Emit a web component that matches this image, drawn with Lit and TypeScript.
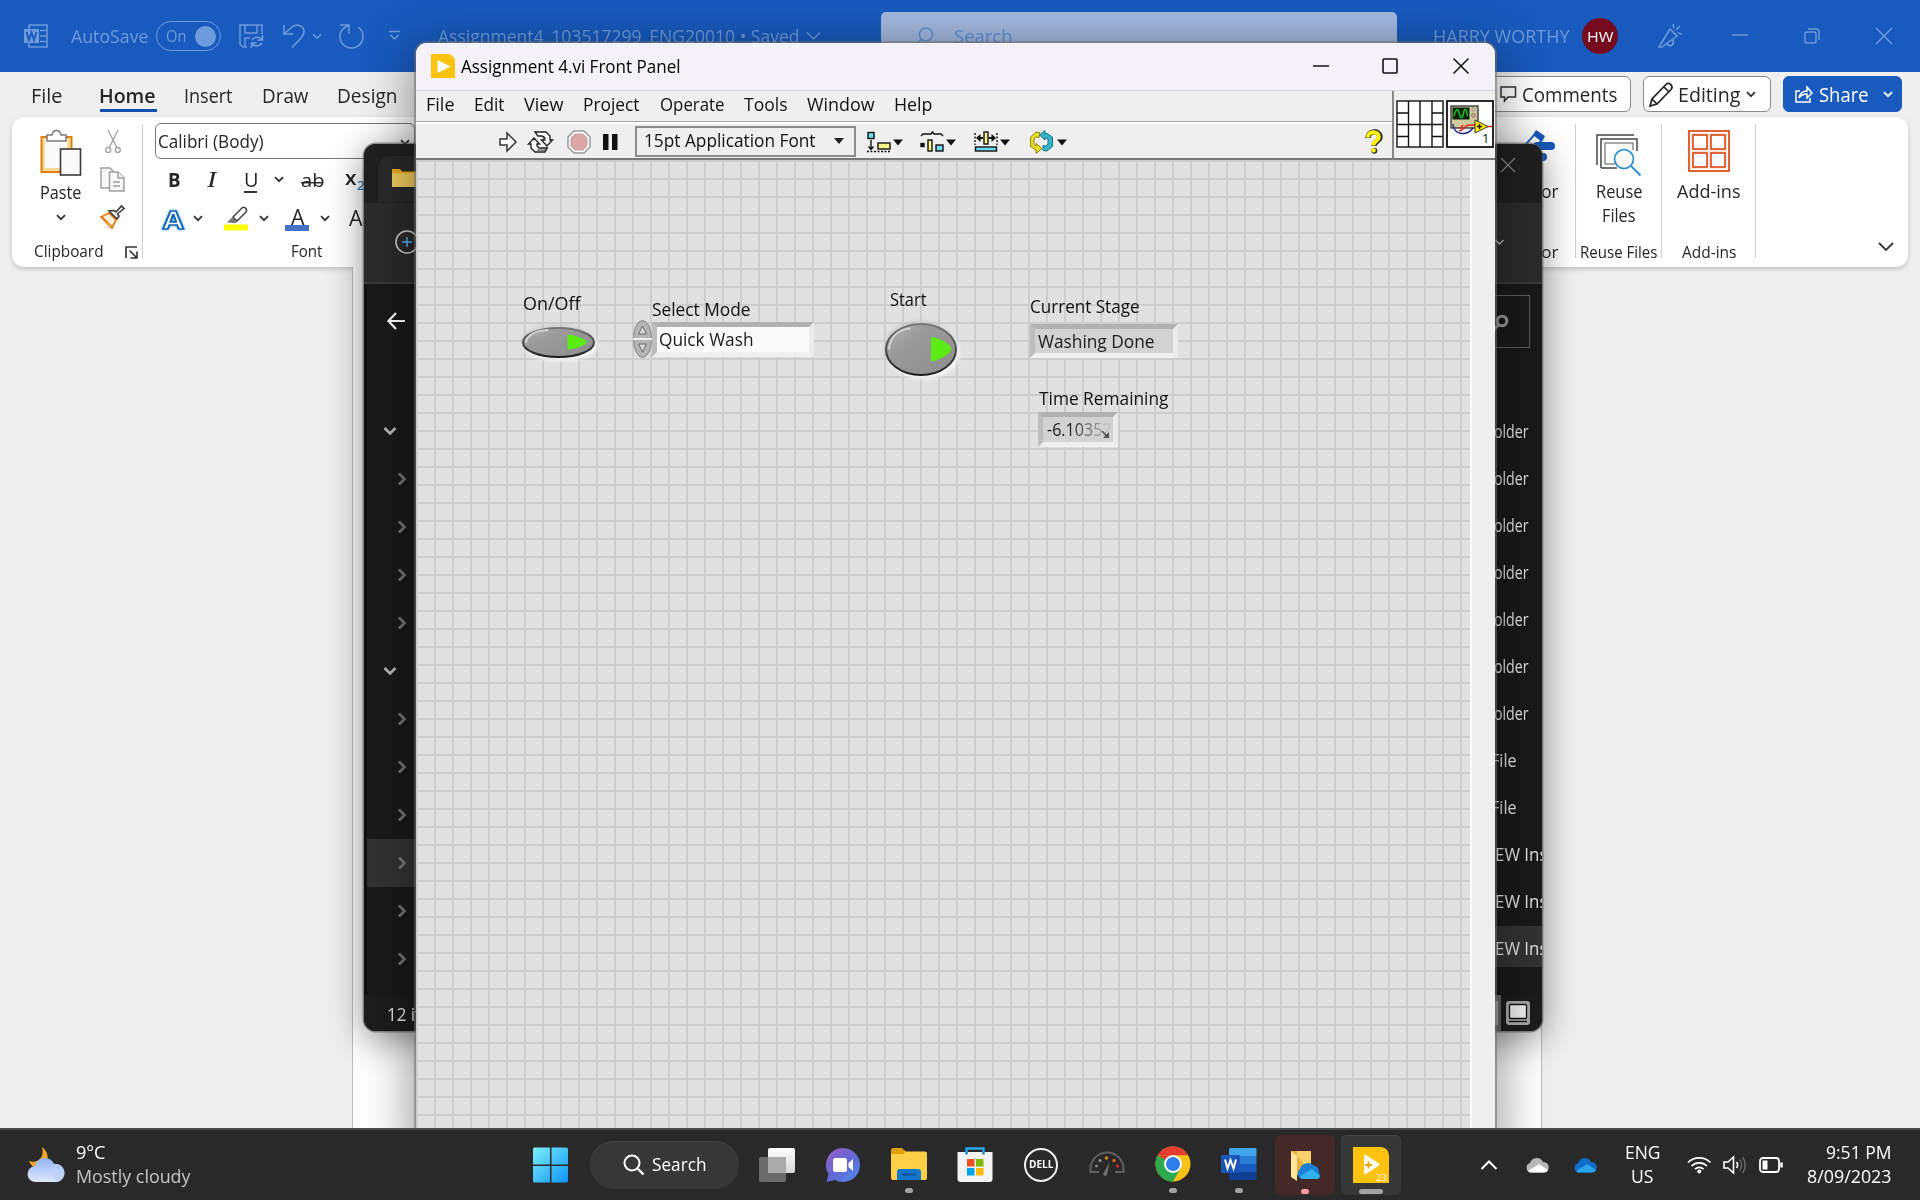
import { LitElement, html, svg, css, type TemplateResult } from "lit";
import { customElement, property } from "lit/decorators.js";

/** Renders a run of text condensed or expanded to an exact advance width. */
@customElement("fit-label")
class FitLabel extends LitElement {
  @property({ type: Number }) w = 0;
  @property() text = "";
  static styles = css`
    :host { display: inline-block; white-space: pre; text-align: left; line-height: 1.36; flex: none; }
    .run { display: inline-block; transform-origin: 0 50%; }
  `;
  render() {
    return html`<span class="run">${this.text}</span>`;
  }
  updated() {
    const run = this.renderRoot.querySelector<HTMLElement>(".run")!;
    const width = this.w + 1.5;
    run.style.transform = `scaleX(${width / run.getBoundingClientRect().width})`;
    this.style.width = `${this.w}px`;
    run.style.marginLeft = "-0.4px";
  }
}

const t = (text: string, w: number, cls = "") =>
  html`<fit-label class=${cls} .text=${text} .w=${w}></fit-label>`;

const ic = (w: number, h: number, body: unknown, cls = "") =>
  html`<svg class="ic ${cls}" width=${w} height=${h} viewBox="0 0 ${w} ${h}">${body}</svg>`;

const caret = (cls = "") => ic(10, 7, svg`<path d="M1 1.2 5 5.2 9 1.2" />`, "line2 " + cls);
const chevRight = () => ic(10, 14, svg`<path d="M2 1.5 7.5 7 2 12.5" />`, "chev");
const chevDown = () => ic(14, 10, svg`<path d="M1.5 2 7 7.5 12.5 2" />`, "chev lit");
const drop = () => svg`<path d="M26 8.500h10l-5 6z" fill="#111"/>`;

/* ---------- Word ---------- */
const wordLogo = ic(24, 24, svg`
  <g fill="none" stroke="#6e9bdb" stroke-width="1.5"><path d="M5 5V1h18v22H5v-4M16 6.500h7M16 12h7M16 17.500h7"/></g>
  <rect x="0" y="5" width="15" height="14" fill="#6e9bdb"/>
  <path d="M2.500 8 5 16 7.500 8.500 10 16 12.500 8" fill="none" stroke="#185abd" stroke-width="1.900"/>`);
const saveIcon = ic(25, 25, svg`<path d="M8 23H4L1 20V1h22v9M6 1v8h12V1M6 22v-8h5M13 16a6 5 0 0 1 10-1M23.500 11v5h-5M23 19a6 5 0 0 1-10 1M12.500 24v-5h5"/>`, "dim");
const undoIcon = ic(24, 25, svg`<path d="M1 1v9h9M1.500 9.500 9 3c5-4 12-1 12 4.500 0 4-2 6-12 16"/>`, "dim");
const redoIcon = ic(25, 25, svg`<path d="M1 1h9v9M9.500 1.500C4 3.500 1 8 1 12.500a11.500 11.500 0 1 0 18-9.500"/>`, "dim");
const penIcon = ic(25, 25, svg`<path d="M1 23 12 5l7 7L3 23.500zM9 20a3.500 3.500 0 0 0 6 0 3 3 0 0 0-1-4M15 0l1 4M22 2l-4 4M20 9l4 1"/>`, "dim");

const pasteIcon = ic(42, 46, svg`
  <rect x="1.500" y="7" width="30" height="35" fill="#f8dc94" stroke="#e27d13" stroke-width="2"/>
  <rect x="5" y="9" width="22" height="29" fill="#fafafa"/>
  <path d="M7 11V5h5c1-6 8-6 9 0h5v6z" fill="#fff" stroke="#7a7a7a" stroke-width="1.500"/>
  <rect x="20.500" y="19" width="20" height="26" fill="#fafafa" stroke="#3b3a39" stroke-width="1.600"/>`);
const cutIcon = ic(16, 25, svg`<g fill="none" stroke="#a6a6a6" stroke-width="1.400"><path d="M3 1 11.500 18M13 1 4.500 18"/><circle cx="3.200" cy="21" r="2.500"/><circle cx="12.800" cy="21" r="2.500"/></g>`);
const copyIcon = ic(25, 25, svg`<g fill="#f7f7f7" stroke="#a0a0a0" stroke-width="1.500"><path d="M9 21H1V1h9l3 3v2"/><path d="M9.500 5H18l6 6v13H9.500z"/><path d="M18 5v6h6M13 15h7M13 19h7"/></g>`);
const brushIcon = ic(25, 24, svg`
  <path d="M1 12 9 8l7 7-4 8z" fill="#fdf3e0" stroke="#e8780c" stroke-width="1.700"/><path d="M3 12.500 12 21l-1.500 2z" fill="#f6c066" stroke="#e8780c"/>
  <path d="M9 6l8 8 2-3-1.500-2L24 3.500 21.500 1 16 7l-2-1.500z" fill="#fff" stroke="#3b3a39" stroke-width="1.600"/>`);
const launcher = ic(13, 13, svg`<path d="M1 12V1h11M4.500 4.500l7 7M12 5.500V12H5.500" fill="none" stroke="#333" stroke-width="1.600"/>`);
const marker = ic(25, 25, svg`
  <path d="M9 11 18 2c2-2 6 1 4 4l-9 9z" fill="#fff" stroke="#444" stroke-width="1.500"/>
  <path d="M3 16.500 8.500 11l5 5-2.500 1z" fill="#777"/><rect y="18.500" width="24" height="6" fill="#ffff00"/>`);
const reuseIcon = ic(46, 42, svg`
  <g fill="none" stroke="#444" stroke-width="1.500"><path d="M1 31V1h37M5 34V5h36v12M5 34h16"/><path d="M9 30V9h28v7M9 30h10" stroke="#8a8a8a"/></g>
  <circle cx="28" cy="25" r="9.500" fill="#fafafa" stroke="#2b8fd0" stroke-width="1.700"/><path d="M35 32 44.500 41.500" stroke="#2b8fd0" stroke-width="2"/>`);
const addinsIcon = ic(42, 42, svg`
  <rect x="1" y="1" width="40" height="40" fill="#fff" stroke="#d83b01" stroke-width="1.600"/>
  <path d="M3 3h36v36H3z" fill="#fbe6df"/>
  <g fill="#fff" stroke="#d83b01" stroke-width="1.500"><rect x="5" y="5" width="14" height="14"/><rect x="23" y="5" width="14" height="14"/><rect x="5" y="23" width="14" height="14"/><rect x="23" y="23" width="14" height="14"/></g>`);
const editorIcon = ic(50, 34, svg`
  <path d="M4 26 24 4l6 6-12 18" fill="#fff" stroke="#2b65c0" stroke-width="2"/><path d="M24 1l9 6-3 6-9-7z" fill="#185abd"/>
  <rect x="21" y="13" width="22" height="8" rx="4" fill="#185abd"/><rect x="14" y="24" width="21" height="8" rx="4" fill="#185abd"/>`);

/* ---------- LabVIEW ---------- */
const lvIcon = ic(24, 24, svg`<path d="M0 0h19l5 5v19H0z" fill="#ffc20e"/><path d="M6.500 6v13L19.500 12.500z" fill="#fff"/>`);
const runIcon = ic(18, 22, svg`<path d="M1 8h7V2l9 9-9 9v-6H1z" fill="#fff" stroke="#333" stroke-width="1.500"/>`);
const loopIcon = ic(25, 22, svg`<g fill="#fff" stroke="#222" stroke-width="1.400">
  <path d="M7 1h11l4 4v4h2.500L19 15l-5.500-6H16V6l-2-1h-4z"/><path d="M17 21H7l-4-4v-4H.500L6 7l5.500 6H9v2l2 2h8z"/></g><path d="M9 19h9l2-2M17 6v4" fill="none" stroke="#222"/>`);
const stopIcon = ic(24, 24, svg`<path d="M7 1h10l6 6v10l-6 6H7l-6-6V7z" fill="#fff" stroke="#999" stroke-width="1.500"/><path d="M8 4h8l4 4v8l-4 4H8l-4-4V8z" fill="#dba6a8" stroke="#c79a9c"/>`);
const pauseIcon = ic(15, 16, svg`<path d="M0 0h5.500v16H0zM9 0h5.500v16H9z" fill="#111"/>`);
const alignIcon = ic(40, 22, svg`<g stroke="#111" stroke-width="1.400"><rect x="1" y="1.500" width="6" height="6" fill="#6cdcf5"/><rect x="11" y="12" width="12" height="6" fill="#f7f58a"/><path d="M4 9v9M1.500 15.500 4 18.500l2.500-3" fill="none"/><path d="M0 20.500h24" stroke-dasharray="2 1.500"/></g>${drop()}`);
const distIcon = ic(40, 22, svg`<g stroke="#111" stroke-width="1.400"><path d="M1 5 3 3h8L12.500 1 14 3h7L23 5" fill="none"/><rect x="8" y="9" width="4" height="11" fill="#f7f58a"/><rect x="16" y="14" width="7" height="6" fill="#6cdcf5"/><rect x="1" y="12.500" width="3" height="3" fill="#111"/></g>${drop()}`);
const sizeIcon = ic(40, 22, svg`<g stroke="#111" stroke-width="1.400"><path d="M1 2v12M23 2v12" stroke-dasharray="2 1.500"/><path d="M3 7h6M15 7h6" fill="none" stroke-width="1.800"/><path d="M6.500 3 2 7l4.500 4zM17.500 3 22 7l-4.500 4z" fill="#111" stroke="none"/><rect x="10" y="1" width="4" height="12" fill="#f7f58a"/><rect x="1.500" y="16" width="21" height="4" fill="#6cdcf5"/></g>${drop()}`);
const orderIcon = ic(42, 24, svg`
  <path d="M11 2.500 7 2 1.500 7v9.500L7 20v3.500l6-5-6-5V16l-2-1.500V9l2-2 3 .500z" fill="#e6de1e" stroke="#8c8512" stroke-width="1"/>
  <path d="M16 .500l-5.500 4.500 5.500 5V7.500l3 1.500v5l-2 2-3-.500v5l4 .500 5.500-4.500V7l-5.500-3.500H16z" fill="#36b2ca" stroke="#177286" stroke-width="1"/><path d="M28 9.500h10l-5 6z" fill="#111"/>`);
const helpIcon = ic(18, 24, svg`
  <path d="M3 8c0-8 12-8 12-1 0 4-6 4.500-6 9" fill="none" stroke="#333" stroke-width="5.500"/><circle cx="9.300" cy="20.700" r="3" fill="#333"/>
  <path d="M2.800 7.500c0-7 11-7 11-.5 0 4-5.500 4-5.500 8.500" fill="none" stroke="#fff200" stroke-width="4"/><circle cx="8.600" cy="20.300" r="2.200" fill="#fff200"/>`);
const paneIcon = ic(48, 48, svg`<g fill="#fff" stroke="#111" stroke-width="1.400"><rect x="1" y="1" width="46" height="46"/><path d="M12.500 1v46M24 1v46M36 1v46M1 24.500h46M1 13h11.500M1 36.500h11.500M36 13h11M36 36.500h11" fill="none"/></g>`);
const viIcon = svg`
  <rect x="1" y="1" width="46" height="46" fill="#fff" stroke="#111" stroke-width="1.800"/>
  <rect x="5" y="6" width="27" height="22" fill="#cfcb9c" stroke="#222" stroke-width="1.200"/><rect x="6.500" y="7.500" width="17" height="12" fill="#062206"/>
  <path d="M8 16c2-8 4-8 5.500-2s3 4 4-1 3-5 4 3" fill="none" stroke="#18c22a" stroke-width="1.500"/>
  <circle cx="27.500" cy="9.500" r="1.500" fill="#f7f7f7" stroke="#333" stroke-width=".6"/><circle cx="27.500" cy="15.500" r="1.800" fill="#f2b2a0" stroke="#333" stroke-width=".6"/>
  <path d="M7 24c1 12 14 12 20 4" fill="none" stroke="#22228f" stroke-width="1.500"/><path d="M13 31c5 0 5-6 10-6h6M14 29l3-4M40 26.500h6" fill="none" stroke="#e3261b" stroke-width="1.500"/>
  <path d="M29 20v13l13-6.500z" fill="#ffee00" stroke="#333"/><path d="M31 26.500h5M33.500 24v5" stroke="#111" stroke-width="1.300"/>
  <text x="36" y="43" font-size="13" font-family="Open Sans" fill="#111">1</text>`;

const ellipseButton = (w: number, h: number, tri: TemplateResult | ReturnType<typeof svg>, id: string) => html`
  <svg class="ic" width=${w + 12} height=${h + 12} viewBox="-6 -6 ${w + 12} ${h + 12}">
    <defs>
      <linearGradient id=${id} x1="0" y1="0" x2="1" y2="1"><stop offset="0" stop-color="#b5b5b5"/><stop offset=".35" stop-color="#9a9a9a"/><stop offset="1" stop-color="#8d8d8d"/></linearGradient>
      <linearGradient id="${id}e" x1="0" y1="0" x2="0" y2="1"><stop offset="0" stop-color="#777"/><stop offset="1" stop-color="#1c1c1c"/></linearGradient>
      <filter id="${id}b" x="-20%" y="-30%" width="140%" height="160%"><feGaussianBlur stdDeviation="2"/></filter>
    </defs>
    <ellipse cx=${w / 2 + 2} cy=${h / 2 + 2.5} rx=${w / 2} ry=${h / 2} fill="#fff" filter="url(#${id}b)"/>
    <ellipse cx=${w / 2 - 1} cy=${h / 2 - 1.5} rx=${w / 2} ry=${h / 2} fill="#bdbdbd" filter="url(#${id}b)" opacity=".6"/>
    <ellipse cx=${w / 2} cy=${h / 2} rx=${w / 2 - 1} ry=${h / 2 - 1} fill="url(#${id})" stroke="url(#${id}e)" stroke-width="2"/>
    <path d="M4 ${h / 2}C5 ${h * 0.24} ${w * 0.2} ${h * 0.12} ${w * 0.36} ${h * 0.1}" fill="none" stroke="#e2e2e2" stroke-width="2" opacity=".8"/>
    ${tri}
  </svg>`;

/* ---------- Taskbar ---------- */
const weather = ic(38, 36, svg`
  <defs><linearGradient id="cl" x1="0" y1="0" x2="0" y2="1"><stop offset="0" stop-color="#8fb2f5"/><stop offset="1" stop-color="#dfe8fc"/></linearGradient></defs>
  <path d="M14 0c7 5 8 15 1 20-5 3-11 1-14-6 8 3 16-3 13-14z" fill="#f5a623"/>
  <path d="M8 35a8 8 0 0 1-1-16 10 10 0 0 1 19-2 9 9 0 0 1 3 18z" fill="url(#cl)"/><path d="M22 20a8 8 0 0 1 14 6c0 5-4 9-8 9" fill="#b9cdf8" opacity=".7"/>`);
const winLogo = ic(36, 36, svg`
  <defs><linearGradient id="wl" x1="0" y1="0" x2="36" y2="36" gradientUnits="userSpaceOnUse"><stop offset="0" stop-color="#7ff0ff"/><stop offset="1" stop-color="#0a93f5"/></linearGradient></defs>
  <path d="M0 2Q0 .500 1.500.500H17v17H0zM18.500 .500h15q1.500 0 1.500 1.500v15.500H18.500zM0 19h17v16.500H1.500Q0 35.500 0 34zM18.500 19H35v15q0 1.500-1.500 1.500h-15z" fill="url(#wl)"/>`);
const findIcon = ic(22, 22, svg`<circle cx="9" cy="9" r="7.500" fill="none" stroke="#fff" stroke-width="2"/><path d="M14.500 14.500 20.500 20.500" stroke="#fff" stroke-width="2.400"/>`);
const taskView = ic(36, 36, svg`
  <defs><linearGradient id="tv" x1="0" y1="0" x2="0" y2="1"><stop offset="0" stop-color="#fff"/><stop offset="1" stop-color="#d8d8d8"/></linearGradient></defs>
  <rect x="0" y="10" width="27" height="25" rx="2" fill="#6b6b6b"/><rect x="9" y="1" width="27" height="25" rx="2" fill="url(#tv)"/><path d="M9 10h18v16H9z" fill="#ababab"/>`);
const chatIcon = ic(36, 36, svg`
  <defs><linearGradient id="ch" x1="0" y1="0" x2="1" y2="1"><stop offset="0" stop-color="#9a5fc0"/><stop offset=".5" stop-color="#6366d4"/><stop offset="1" stop-color="#4d8ff0"/></linearGradient></defs>
  <path d="M18 1a17 17 0 1 1-8 32l-8.500 2 2-8A17 17 0 0 1 18 1z" fill="url(#ch)"/><rect x="8" y="11" width="14" height="14" rx="2.500" fill="#fff"/><path d="M23.500 16 28 12v12l-4.500-4z" fill="#fff"/>`);
const folderIcon = ic(38, 36, svg`
  <path d="M1 4q0-2 2-2h9l4 4v6H1z" fill="#e09f00"/><rect x="1" y="5.500" width="36" height="28.500" rx="2" fill="#ffcf48"/><path d="M1 8V4h13l2 1.500L13 8z" fill="#e09f00"/>
  <path d="M7 34V26q0-3 3-3h18q3 0 3 3v8z" fill="#1277cd"/><path d="M12 28.500h14" stroke="#0b4c8c" stroke-width="2"/>`);
const storeIcon = ic(36, 36, svg`
  <path d="M9.500 6V1.500h17V6" fill="none" stroke="#26a9f0" stroke-width="2.400"/><path d="M.500 5h35v27q0 3-3 3h-29q-3 0-3-3z" fill="#f3f3f3"/><path d="M9.500 5v2.500M26.500 5v2.500" stroke="#1583c9" stroke-width="2.400"/>
  <path d="M10 12h7.500v7.500H10z" fill="#f25022"/><path d="M19 12h7.500v7.500H19z" fill="#7fba00"/><path d="M10 21h7.500v7.500H10z" fill="#00a4ef"/><path d="M19 21h7.500v7.500H19z" fill="#ffb900"/>`);
const gaugeIcon = ic(36, 36, svg`
  <path d="M10 25H1.500v-3a16.500 16.500 0 0 1 33 0v3H26" fill="none" stroke="#606060" stroke-width="2"/><path d="M20.500 15.500 18 28q-2.500 2.500-4-1z" fill="#707070"/>
  <g fill="#e08a1e"><circle cx="17.500" cy="11" r="1.700"/><circle cx="25" cy="13.500" r="1.700" fill="#d9642b"/><circle cx="28.500" cy="19" r="1.700" fill="#c22"/><circle cx="11" cy="13.500" r="1.500" fill="#999"/><circle cx="7.500" cy="19" r="1.500" fill="#888"/></g>`);
const chromeIcon = ic(36, 36, svg`
  <circle cx="18" cy="18" r="17.500" fill="#fbc116"/><path d="M2.800 9.300A17.500 17.500 0 0 1 33.200 9.300H18z" fill="#e33b2e"/><path d="M2.800 9.300A17.500 17.500 0 0 0 18 35.500L25.500 22.500 18 18 10.500 22z" fill="#2da94f"/><path d="M2.800 9.300H18L10.500 18z" fill="#e33b2e"/><path d="M2.800 9.300 10.300 22 10.500 14z" fill="#2da94f"/>
  <circle cx="18" cy="18" r="9" fill="#fff"/><circle cx="18" cy="18" r="7" fill="#2f7de9"/>`);
const wordTask = ic(36, 36, svg`
  <path d="M8 3.500q0-1.500 1.500-1.500h25q1 0 1 1.500V10H8z" fill="#41a5ee"/><path d="M8 10h27.500v8H8z" fill="#2b7cd3"/><path d="M8 18h27.500v8H8z" fill="#185abd"/><path d="M8 26h27.500v6.500q0 1.500-1 1.500h-25Q8 34 8 32.500z" fill="#103f91"/>
  <rect x="0" y="9" width="19" height="18" rx="1.500" fill="#1a56b8"/><path d="M4 13.500 6.500 22.500 9.500 14 12.500 22.500 15 13.500" fill="none" stroke="#fff" stroke-width="2"/>`);
const oneFolder = ic(36, 36, svg`
  <path d="M4 4h20v24H4z" fill="#e8b13f"/><path d="M4 4l6 5v25l-6-4z" fill="#ffe49a"/><path d="M10 9V4h14v20z" fill="#f7cf6b"/>
  <path d="M14 32a6 6 0 0 1-1-10 8 8 0 0 1 13-4 7 7 0 0 1 6 8 4 4 0 0 1-1 6z" fill="#1a7fd6"/><path d="M13 29l12-7 8 7a4 4 0 0 1-3 3H15z" fill="#2fb0f0"/>`);
const lvTask = ic(36, 36, svg`
  <path d="M0 0h28q8 1 8 9v27H0z" fill="#ffc20e"/><path d="M11 9q0-2 2-1l13 8.500q1 1 0 2L13 27q-2 1-2-1z" fill="#fff"/><path d="M12 18h7M15.500 14.500v7" stroke="#e5a800" stroke-width="1.800"/>
  <text x="23" y="34" font-size="9.500" fill="#fff" font-family="Open Sans" textLength="11">23</text>`);
const cloud = (a: string, b: string) => ic(24, 16, svg`<path d="M5 15.500A5 5 0 0 1 5 6a7 7 0 0 1 13-1 5 5 0 0 1 1 10.500z" fill=${a}/><path d="M3 14 14 7l9 6q-1 2.500-4 2.500H5z" fill=${b}/>`);
const wifi = ic(25, 18, svg`<g fill="none" stroke="#fff" stroke-width="1.700"><path d="M1 6.500a16 16 0 0 1 22.500 0M4.500 10a11 11 0 0 1 15.500 0M8 13.200a6 6 0 0 1 8.500 0"/></g><circle cx="12.300" cy="15.500" r="2" fill="#fff"/>`);
const volume = ic(24, 18, svg`<path d="M1 6h4l5.500-5v16L5 12H1z" fill="none" stroke="#fff" stroke-width="1.600"/><path d="M13.500 6a5 5 0 0 1 0 6" fill="none" stroke="#fff" stroke-width="1.600"/><path d="M16.500 3.500a9 9 0 0 1 0 11M19.500 1a13 13 0 0 1 0 16" fill="none" stroke="#666" stroke-width="1.600"/>`);
const battery = ic(25, 16, svg`<rect x="1" y="1" width="19" height="14" rx="3" fill="none" stroke="#fff" stroke-width="1.800"/><rect x="3.500" y="3.500" width="5" height="9" fill="#fff"/><path d="M22.500 5.500v5" stroke="#fff" stroke-width="2.500"/>`);

const base = css`
  :host { display: block; font-family: "Open Sans", "Noto Sans", sans-serif; font-size: 17.5px; color: #262626; }
  .ic { display: block; flex: none; overflow: visible; }
  .line2 { fill: none; stroke: #333; stroke-width: 1.8; }
  .dim { fill: none; stroke: #6e9bdb; stroke-width: 1.5; }
  .white { stroke: #fff; }
  .row { display: grid; align-items: center; }
`;

@customElement("word-window")
class WordWindow extends LitElement {
  static styles = [base, css`
    :host { height: 1128px; background: #efefef; }
    .title { height: 72px; background: #185abd; color: #6e9bdb; padding-left: 24px;
      grid-template-columns: 47px 85px 83px 44px 29px 27px 50px 49px 368px 75px 552px 149px 76px 74px 72px 72px 20px; }
    .title fit-label { margin-top: 1px; }
    .toggle { width: 65px; height: 30px; border: 1.5px solid #6e9bdb; border-radius: 16px; display: flex; align-items: center; justify-content: space-between; padding: 0 4px 0 9px; box-sizing: border-box; font-size: 16.5px; }
    .knob { width: 21px; height: 21px; border-radius: 50%; background: #6e9bdb; }
    .find { width: 516px; height: 49px; box-sizing: border-box; background: #a3b9df; border-radius: 5px; display: flex; align-items: center; gap: 20px; padding-left: 34px; color: #5f8fd8; }
    .find .dim { stroke: #5f8fd8; }
    .avatar { width: 36px; height: 36px; border-radius: 50%; background: #750b1c; color: #fff; display: grid; place-items: center; font-size: 15px; }
    .tabs { height: 44px; padding-left: 32px; font-size: 19.5px; grid-template-columns: 68px 85px 78px 75px 1112px 193px 140px 119px; }
    .tab { display: grid; height: 44px; box-sizing: border-box; padding-top: 4px; align-items: center; justify-content: start; }
    .tab fit-label { margin-left: -0.6px; }
    .on { font-weight: 600; box-shadow: inset 0 -4px #efefef, inset 0 -7px #134fad; width: 57px; }
    .btn { height: 36px; box-sizing: border-box; background: #fff; border: 1px solid #8a8a8a; border-radius: 6px; display: flex; align-items: center; }
    .btn fit-label { margin: 3px 0 0 -0.5px; }
    .comments { width: 181px; padding-left: 49px; gap: 6px; }
    .editing { width: 128px; padding-left: 5px; gap: 6px; }
    .share { width: 119px; padding-left: 11px; background: #185abd; border-color: #185abd; color: #fff; gap: 7px; }
    .share .white { margin-left: 8px; }
    .ribbon { margin: 1px 12px 0; height: 150px; border-radius: 12px; background: #fff; box-shadow: 0 2px 5px rgba(0,0,0,.2); display: flex; }
    .group { border-right: 1px solid #d0d0d0; margin: 7px 0 9px; height: 134px; box-sizing: border-box; display: flex; flex-direction: column; }
    .group > * { flex-shrink: 0; }
    .clip { width: 131px; }
    .clipTop { height: 114px; box-sizing: border-box; display: flex; padding-left: 28px; gap: 18px; }
    .pasteCol { width: 42px; display: flex; flex-direction: column; align-items: center; padding-top: 6px; gap: 5px; }
    .pasteCol .line2 { margin-top: 4px; }
    .pasteCol fit-label { margin-left: -1px; }
    .smallCol { display: flex; flex-direction: column; align-items: center; justify-content: space-between; padding: 5px 0 9px; }
    .smallLabel { font-size: 16px; display: flex; align-items: center; height: 24px; }
    .clip .smallLabel { padding: 2px 0 0 22px; gap: 23px; }
    .font { width: 280px; padding-left: 12px; border: 0; }
    .family { width: 260px; height: 36px; margin-top: -1px; border: 1px solid #777; border-radius: 6px; box-sizing: border-box; display: flex; align-items: center; justify-content: space-between; padding: 2px 4px 0 2px; }
    .fmt { height: 39px; margin-top: 1px; grid-template-columns: 39px 37px 30px 27px 44px 40px; padding-left: 13px; font-size: 20px; }
    .fmt2 { height: 39px; grid-template-columns: 31px 31px 35px 26px 35px 29px 30px; padding-left: 7px; font-size: 21px; }
    .b { font-weight: 700; } .i { font-style: italic; font-family: "Liberation Serif", serif; font-size: 23px; } .u { border-bottom: 2px solid #333; line-height: 1.1; }
    .s { font-size: 18px; background: linear-gradient(#333 0 0) 0 62% / 100% 1.5px no-repeat; }
    .sub { color: #2b7fc3; font-size: 13px; font-weight: 600; margin: 13px 0 0 2px; }
    .x { display: flex; font-weight: 600; }
    .fx { color: #fff; font-weight: 700; font-size: 25px; -webkit-text-stroke: 1.7px #1267b4; filter: drop-shadow(0 0 1.5px #56b0f0); margin-left: 1px; }
    .col { border-bottom: 6px solid #4472c4; width: 24px; line-height: 1; display: grid; justify-content: center; font-size: 21px; height: 19px; align-items: center; }
    .col fit-label { margin-top: -3px; }
    .font .smallLabel { padding: 1px 0 0 136px; height: 26px; }
    .gap { flex: 1; }
    .editor { width: 90px; align-items: flex-end; padding: 5px 18px 0 0; }
    .editor .ic { margin-right: -5px; }
    .reuse { width: 86px; align-items: center; padding-top: 10px; }
    .addins { width: 94px; align-items: center; padding-top: 6px; }
    .big { height: 24px; display: grid; align-items: center; margin-top: 4px; }
    .addins .big { margin-top: 8px; } .editor .big { margin-top: 17px; }
    .big + .big { margin-top: 0; }
    .push { margin-top: auto; margin-bottom: -7px; }
    .more { width: 152px; display: flex; justify-content: flex-end; align-items: flex-end; padding: 0 14px 15px 0; box-sizing: border-box; }
    .page { margin: 0 378px 0 352px; height: 861px; background: #fff; border: solid #bdbdbd; border-width: 0 1px; }
  `];
  render() {
    return html`
      <div class="row title">
        ${wordLogo}${t("AutoSave", 76)}
        <div class="toggle">${t("On", 19)}<span class="knob"></span></div>
        ${saveIcon}${undoIcon}${caret("dim")}${redoIcon}
        ${ic(12, 12, svg`<path d="M0 1.500h11M1.500 5l4 4 4-4"/>`, "dim")}
        ${t("Assignment4_103517299_ENG20010 • Saved", 360)}
        ${ic(15, 10, svg`<path d="M1 1.500 7.500 8 14 1.500"/>`, "dim")}
        <div class="find">${ic(19, 19, svg`<circle cx="11" cy="7.500" r="6.500"/><path d="M6.500 12 1 18"/>`, "dim")}${t("Search", 57)}</div>
        ${t("HARRY WORTHY", 135)}
        <div class="avatar">${t("HW", 25)}</div>
        ${penIcon}
        ${ic(16, 16, svg`<path d="M0 7h16"/>`, "dim")}
        ${ic(16, 16, svg`<rect x="1" y="4" width="11" height="11" rx="2"/><path d="M4 1h8q3 0 3 3v8"/>`, "dim")}
        ${ic(16, 16, svg`<path d="M0 0l16 16M16 0 0 16"/>`, "dim")}
      </div>
      <div class="row tabs">
        <span class="tab">${t("File", 30)}</span><span class="tab on">${t("Home", 55)}</span>
        <span class="tab">${t("Insert", 47)}</span><span class="tab">${t("Draw", 45)}</span>
        <span class="tab">${t("Design", 59)}</span>
        <div class="btn comments">${ic(17, 16, svg`<path d="M1 1h14.500v10H8l-3.500 4v-4H1z" fill="none" stroke="#333" stroke-width="1.500"/>`)}${t("Comments", 94)}</div>
        <div class="btn editing">${ic(24, 25, svg`<path d="M1 24 3 17 17 2.500c3-3 8 1.500 5 5L8 22zM15 5l5 5M3 17l5 5" fill="none" stroke="#222" stroke-width="1.700"/>`)}${t("Editing", 61)}${caret()}</div>
        <div class="btn share">${ic(18, 18, svg`<path d="M5 6H1v11h14v-4M4 13c1-5 4-7 8-7V2l5 6-5 5V9c-4 0-6 1-8 4z" fill="none" stroke="#fff" stroke-width="1.500"/>`)}${t("Share", 48)}${caret("white")}</div>
      </div>
      <div class="ribbon">
        <div class="group clip">
          <div class="clipTop">
            <div class="pasteCol">${pasteIcon}${t("Paste", 40)}${caret()}</div>
            <div class="smallCol">${cutIcon}${copyIcon}${brushIcon}</div>
          </div>
          <div class="smallLabel">${t("Clipboard", 68)}${launcher}</div>
        </div>
        <div class="group font">
          <div class="family">${t("Calibri (Body)", 104)}${caret()}</div>
          <div class="row fmt"><span>${t("B", 11, "b")}</span><span>${t("I", 8, "i")}</span><span>${t("U", 13, "u")}</span>${caret()}<span>${t("ab", 22, "s")}</span><span class="x">${t("x", 10)}${t("2", 6, "sub")}</span></div>
          <div class="row fmt2"><span>${t("A", 19, "fx")}</span>${caret()}${marker}${caret()}<span class="col">${t("A", 12)}</span>${caret()}<span>${t("Aa", 24)}</span></div>
          <div class="smallLabel">${t("Font", 30)}</div>
        </div>
        <div class="gap"></div>
        <div class="group editor">${editorIcon}<span class="big">${t("Editor", 46)}</span><span class="smallLabel push">${t("Editor", 46)}</span></div>
        <div class="group reuse">${reuseIcon}<span class="big">${t("Reuse", 45)}</span><span class="big">${t("Files", 32)}</span><span class="smallLabel push">${t("Reuse Files", 76)}</span></div>
        <div class="group addins">${addinsIcon}<span class="big">${t("Add-ins", 62)}</span><span class="smallLabel push">${t("Add-ins", 53)}</span></div>
        <div class="more">${ic(16, 10, svg`<path d="M1 1 8 8l7-7" fill="none" stroke="#333" stroke-width="1.800"/>`)}</div>
      </div>
      <div class="page"></div>`;
  }
}

@customElement("explorer-window")
class ExplorerWindow extends LitElement {
  static styles = [base, css`
    :host { position: absolute; left: 364px; top: 144px; width: 1178px; height: 887px; border-radius: 12px; overflow: hidden; background: #191919; color: #e4e4e4;
      box-shadow: 0 0 0 1.5px rgba(90,90,90,.6), 0 8px 36px rgba(0,0,0,.46); }
    .bar { display: flex; justify-content: space-between; }
    .tabstrip { height: 58px; background: #1f1f1f; }
    .tab { margin: 12px 0 0 14px; width: 300px; background: #2a2a2a; border-radius: 12px 0 0 0; padding: 13px 0 0 14px; box-sizing: border-box; }
    .close { padding: 13px 26px 0 0; }
    .tools { height: 82px; box-sizing: border-box; background: #2b2b2b; border-top: 1px solid #202020; border-bottom: 2px solid #3a3a3a; padding: 27px 38px 0 31px; }
    .body { height: 711px; display: flex; justify-content: space-between; overflow: hidden; }
    .nav { width: 60px; border-left: 3px solid #111; box-sizing: border-box; padding-top: 25px; }
    .back { height: 24px; padding-left: 20px; display: flex; align-items: center; }
    .tree { padding-top: 74px; }
    .node { height: 48px; display: flex; align-items: center; padding-left: 30px; }
    .open { padding-left: 16px; }
    .hot { background: #333; box-sizing: border-box; }
    .files { width: 47px; padding-top: 11px; }
    .box { width: 43px; height: 53px; box-sizing: border-box; border: 1px solid #5c5c5c; margin-left: -8px; display: grid; place-items: center start; }
    .list { padding-top: 60px; }
    .file { height: 47px; display: flex; align-items: center; overflow: hidden; }
    .folder { padding-right: 15px; justify-content: flex-end; }
    .plain { padding-right: 27px; justify-content: flex-end; }
    .sel { background: linear-gradient(#333 0 0) 0 1px / 100% 41px no-repeat; }
    .files .chev, .nav .chev { fill: none; stroke: #777; stroke-width: 2.6; }
    .nav .lit { stroke: #bdbdbd; }
    .status { height: 36px; background: #1c1c1c; align-items: center; padding: 0 12px 0 23px; }
    .status fit-label { margin-top: 3px; }
    .views { display: flex; align-items: center; gap: 5px; }
    .on { width: 40px; height: 36px; background: linear-gradient(#aaa 0 0) 0 50% / 37px 24px no-repeat #666; }
  `];
  render() {
    const tree = ["d", "r", "r", "r", "r", "d", "r", "r", "r", "h", "r", "r"];
    const files = ["older", "older", "older", "older", "older", "older", "older"];
    return html`
      <div class="bar tabstrip">
        <div class="tab">${ic(40, 18, svg`<path d="M0 0h8l2 2.500H40V18H0z" fill="#f0a818"/><path d="M0 4h40v14H0z" fill="#f2cb5e"/>`)}</div>
        <div class="close">${ic(16, 16, svg`<path d="M1 1l14 14M15 1 1 15" stroke="#858585" stroke-width="1.300"/>`)}</div>
      </div>
      <div class="bar tools">
        ${ic(24, 24, svg`<circle cx="12" cy="12" r="11" fill="none" stroke="#d0d0d0" stroke-width="1.500"/><path d="M12 7v10M7 12h10" stroke="#4cb8f0" stroke-width="1.500"/>`)}
        ${ic(10, 24, svg`<path d="M1.500 10 5.500 14l4-4" fill="none" stroke="#bbb" stroke-width="1.500"/>`)}
      </div>
      <div class="body">
        <div class="nav">
          <div class="back">${ic(19, 18, svg`<path d="M1.500 9H18M9 1 1.500 9 9 17" fill="none" stroke="#fff" stroke-width="2.200"/>`)}</div>
          <div class="tree">${tree.map((k) => html`<div class="node ${k === "d" ? "open" : ""} ${k === "h" ? "hot" : ""}">${k === "d" ? chevDown() : chevRight()}</div>`)}</div>
        </div>
        <div class="files">
          <div class="box">${ic(24, 24, svg`<circle cx="14" cy="11" r="4.800" fill="none" stroke="#9a9a9a" stroke-width="3"/><path d="M10 15 4 22" stroke="#9a9a9a" stroke-width="3"/>`)}</div>
          <div class="list">
            ${files.map((f) => html`<div class="file folder">${t(f, 33)}</div>`)}
            <div class="file plain">${t("File", 24)}</div><div class="file plain">${t("File", 24)}</div>
            <div class="file">${t("EW Inst", 57)}</div><div class="file">${t("EW Inst", 57)}</div><div class="file sel">${t("EW Inst", 57)}</div>
          </div>
        </div>
      </div>
      <div class="bar status">${t("12 items", 66)}
        <div class="views"><div class="on"></div>${ic(24, 24, svg`<rect width="24" height="24" rx="3" fill="#aaa"/><rect x="3.500" y="3.500" width="17" height="14" rx="1" fill="#eee" stroke="#111" stroke-width="1.300"/><path d="M3 20.500h18" stroke="#111" stroke-width="1.300"/>`)}</div>
      </div>`;
  }
}

@customElement("labview-window")
class LabviewWindow extends LitElement {
  static styles = [base, css`
    :host { position: absolute; left: 416px; top: 43px; width: 1079px; height: 1110px; border-radius: 11px 11px 0 0; overflow: hidden; background: #efefef; color: #111;
      box-shadow: 0 0 0 2px rgba(110,110,110,.55), 0 10px 50px 4px rgba(0,0,0,.42); }
    .title { height: 48px; box-sizing: border-box; background: #f4f1f8; border-bottom: 1px solid #d9d9d9; padding: 0 0 2px 15px; grid-template-columns: 30px 852px 69px 71px 42px; color: #000; }
    .title fit-label { margin-top: 2px; }
    .head { display: flex; height: 67px; border-bottom: 2px solid #777; background: #efefef; }
    .left { width: 978px; box-sizing: border-box; border-right: 2px solid #888; }
    .menu { height: 30px; box-sizing: border-box; padding: 0 0 3px 10px; grid-template-columns: 48px 50px 59px 77px 84px 63px 87px 80px; }
    .tools { height: 37px; box-sizing: border-box; border-top: 1px solid #a3a3a3; box-shadow: inset 0 2px #fff; padding: 3px 0 0 83px; grid-template-columns: 29px 39px 36px 32px 232px 53px 54px 55px 336px 20px; }
    .fontbox { width: 221px; height: 31px; box-sizing: border-box; border: 2px solid #8c8c8c; display: flex; align-items: center; justify-content: space-between; padding: 0 10px 1px 7px; }
    .panes { display: flex; gap: 2px; padding: 9px 0 0 2px; }
    .work { display: flex; height: 1000px; }
    .canvas { position: relative; width: 1054px; border-right: 2px solid #fbfbfb;
      background: repeating-linear-gradient(90deg, #cdcdcd 0 2px, transparent 2px 18px), repeating-linear-gradient(#cdcdcd 0 2px, transparent 2px 18px), #e1e1e1; }
    .item { position: absolute; }
    .a { left: 107px; top: 131px; } .a2 { left: 100px; top: 161px; }
    .b { left: 236px; top: 137px; } .b2 { left: 236px; top: 162px; } .b3 { left: 217px; top: 160px; }
    .c { left: 474px; top: 127px; } .c2 { left: 463px; top: 157px; }
    .d { left: 614px; top: 134px; } .d2 { left: 614px; top: 164px; }
    .e { left: 623px; top: 226px; } .e2 { left: 622px; top: 252px; }
    .well { box-sizing: border-box; border: 5px solid; border-color: #b1b1b1 #ececec #f0f0f0 #bdbdbd; background: #d2d2d2; display: flex; align-items: center; padding: 1px 0 0 3px; color: #1b1b1b; overflow: hidden; }
    .ring { width: 162px; height: 35px; background: #fbfbfb; padding: 0 0 0 2px; }
    .stage { width: 148px; height: 34px; }
    .time { width: 80px; height: 35px; padding: 0 0 0 4px; }
    .fade { -webkit-mask-image: linear-gradient(90deg, #000 35%, rgba(0,0,0,.1) 95%); mask-image: linear-gradient(90deg, #000 35%, rgba(0,0,0,.1) 95%); }
    .more { margin: 10px 0 0 -9px; }
  `];
  render() {
    const menus: [string, number][] = [["File", 27], ["Edit", 29], ["View", 38], ["Project", 55], ["Operate", 63], ["Tools", 42], ["Window", 66], ["Help", 37]];
    return html`
      <div class="row title">
        ${lvIcon}${t("Assignment 4.vi Front Panel", 218)}
        ${ic(16, 16, svg`<path d="M0 8h16" stroke="#111" stroke-width="1.300"/>`)}
        ${ic(16, 16, svg`<rect x="1" y="1" width="14" height="14" rx="1" fill="none" stroke="#111" stroke-width="1.600"/>`)}
        ${ic(16, 16, svg`<path d="M.5.5l15 15M15.500.5l-15 15" stroke="#111" stroke-width="1.500"/>`)}
      </div>
      <div class="head">
        <div class="left">
          <div class="row menu">${menus.map(([m, w]) => html`<span>${t(m, w)}</span>`)}</div>
          <div class="row tools">
            ${runIcon}${loopIcon}${stopIcon}${pauseIcon}
            <div class="fontbox">${t("15pt Application Font", 170)}${ic(10, 6, svg`<path d="M0 0h10L5 6z" fill="#222"/>`)}</div>
            ${alignIcon}${distIcon}${sizeIcon}${orderIcon}${helpIcon}
          </div>
        </div>
        <div class="panes">${paneIcon}${ic(48, 48, viIcon)}</div>
      </div>
      <div class="work">
        <div class="canvas">
          <div class="item a">${t("On/Off", 56)}</div>
          <div class="item a2">${ellipseButton(73, 31, svg`<path d="M45.500 9q0-1.500 2-1.200c8 1.500 15.500 4 17.500 7.200-2 3.500-9.500 6-17.500 7.500q-2 .3-2-1.200z" fill="#5bec14"/>`, "g1")}</div>
          <div class="item b">${t("Select Mode", 97)}</div>
          <div class="item well ring b2">${t("Quick Wash", 93)}</div>
          <div class="item b3">${ic(19, 38, svg`<ellipse cx="9.500" cy="19" rx="9" ry="18.500" fill="#b5b5b5" stroke="#858585"/><path d="M0 19h19" stroke="#eee" stroke-width="2"/><path d="M5.500 14 9.500 6l4 8z" fill="#d8d8d8" stroke="#666"/><path d="M5.500 24l4 8 4-8z" fill="#d8d8d8" stroke="#666"/>`)}</div>
          <div class="item c">${t("Start", 35)}</div>
          <div class="item c2">${ellipseButton(72, 53, svg`<path d="M46 15.500q0-2 2-1.500c9 2.500 17 7 18.500 12-1.500 5-9.500 9.500-18.500 12.500q-2 .5-2-1.500z" fill="#5bec14"/>`, "g2")}</div>
          <div class="item d">${t("Current Stage", 108)}</div>
          <div class="item well stage d2">${t("Washing Done", 115)}</div>
          <div class="item e">${t("Time Remaining", 128)}</div>
          <div class="item well time e2">${t("-6.10352", 63, "fade")}${ic(9, 9, svg`<path d="M1 1l5 5" stroke="#555" stroke-width="1.500"/><path d="M8 2v6H2z" fill="#555"/>`, "more")}</div>
        </div>
      </div>`;
  }
}

@customElement("task-bar")
class TaskBar extends LitElement {
  static styles = [base, css`
    :host { height: 72px; box-sizing: border-box; background: #292929; border-top: 2px solid #494949; color: #fff; }
    .bar { height: 70px; padding-left: 28px; box-sizing: border-box;
      grid-template-columns: 48px 457px 57px 169px 66px 65px 67px 67px 65px 65px 66px 55px 66px 139px 45px 48px 50px 64px 36px 36px 49px 82px; }
    .two { display: flex; flex-direction: column; line-height: 24px; padding-bottom: 2px; }
    .two fit-label { line-height: 24px; }
    .mute { color: #c6c6c6; }
    .mid { align-items: center; width: 38px; }
    .end { align-items: flex-end; }
    .pill { width: 149px; height: 48px; border-radius: 24px; background: #373737; box-shadow: inset 0 1px #424242; box-sizing: border-box; padding-left: 33px; display: flex; align-items: center; gap: 7px; }
    .app { display: flex; flex-direction: column; align-items: center; width: 38px; height: 60px; padding-top: 11px; box-sizing: border-box; }
    .ind { width: 8px; height: 5px; border-radius: 3px; background: #a3a3a3; margin-top: 6px; }
    .tile { width: 60px; border-radius: 6px; padding-top: 12px; }
    .red { background: #452828; } .red .ind { background: #ff9aa4; }
    .sel { background: #373737; box-shadow: inset 0 1px #484848; } .sel .ind { width: 24px; }
    .dell { width: 30px; height: 30px; border: 2px solid #f0f0f0; border-radius: 50%; display: grid; place-items: center; font-size: 10px; font-weight: 700; }
  `];
  render() {
    const app = (icon: unknown, mark = false, cls = "") => html`<div class="app ${cls}">${icon}${mark ? html`<span class="ind"></span>` : ""}</div>`;
    return html`<div class="row bar">
      ${weather}
      <div class="two">${t("9°C", 28)}${t("Mostly cloudy", 113, "mute")}</div>
      ${winLogo}
      <div class="pill">${findIcon}${t("Search", 53)}</div>
      ${taskView}${chatIcon}
      ${app(folderIcon, true)}${storeIcon}
      <div class="dell">${t("DELL", 23)}</div>
      ${gaugeIcon}
      ${app(chromeIcon, true)}
      ${app(wordTask, true)}
      ${app(oneFolder, true, "tile red")}
      ${app(lvTask, true, "tile sel")}
      ${ic(18, 10, svg`<path d="M1.500 9 9 1.500 16.500 9" fill="none" stroke="#fff" stroke-width="2"/>`)}
      ${cloud("#b7b7b7", "#fff")}${cloud("#0f6cc8", "#2aa4ea")}
      <div class="two mid">${t("ENG", 34)}${t("US", 21)}</div>
      ${wifi}${volume}${battery}
      <div class="two end">${t("9:51 PM", 64)}${t("8/09/2023", 83)}</div>
    </div>`;
  }
}

@customElement("app-root")
class AppRoot extends LitElement {
  static styles = css`
    :host { display: block; width: 1920px; height: 1200px; overflow: hidden; }
    .desktop { position: relative; height: 1128px; overflow: hidden; }
  `;
  render() {
    return html`
      <div class="desktop">
        <word-window></word-window>
        <explorer-window></explorer-window>
        <labview-window></labview-window>
      </div>
      <task-bar></task-bar>`;
  }
}
